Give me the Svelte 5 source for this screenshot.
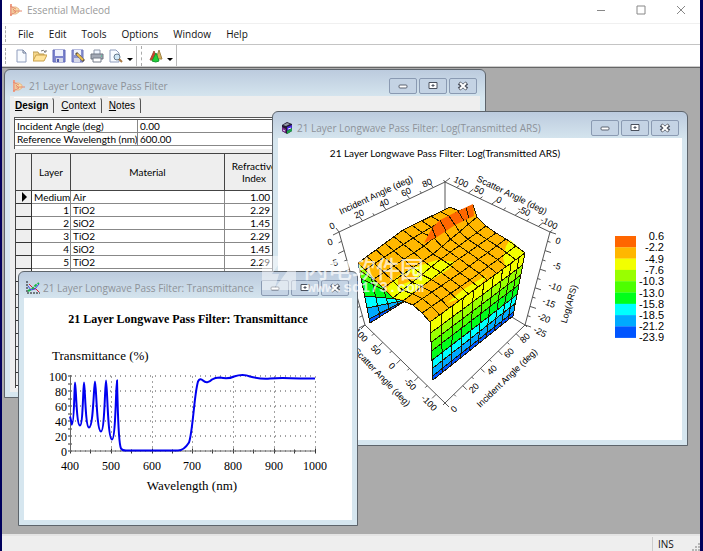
<script lang="ts">
	type Point = [number, number];

	const menus = ['File', 'Edit', 'Tools', 'Options', 'Window', 'Help'];

	const layers = [
		{ name: 'Medium', material: 'Air', index: '1.00' },
		{ name: '1', material: 'TiO2', index: '2.29' },
		{ name: '2', material: 'SiO2', index: '1.45' },
		{ name: '3', material: 'TiO2', index: '2.29' },
		{ name: '4', material: 'SiO2', index: '1.45' },
		{ name: '5', material: 'TiO2', index: '2.29' }
	];
	const emptyRows = Array(9).fill({ name: '', material: '', index: '' });

	const legend = [
		{ color: '#ff6600', label: '0.6' },
		{ color: '#ffb700', label: '-2.2' },
		{ color: '#f2ff00', label: '-4.9' },
		{ color: '#99ff00', label: '-7.6' },
		{ color: '#4dff00', label: '-10.3' },
		{ color: '#00ff1a', label: '-13.0' },
		{ color: '#00ffff', label: '-15.8' },
		{ color: '#00aaff', label: '-18.5' },
		{ color: '#0055ff', label: '-21.2' }
	];

	// transmittance curve: ripples below the cut, then the pass band
	const ripples: Point[] = [
		[72, 424], [75, 382], [80, 425], [84, 382], [89, 427], [95, 381],
		[101, 431], [106, 380], [112, 439], [117, 380]
	];

	const ripplePath = () => {
		let d = 'M70 416L72 424';
		for (let i = 1; i < ripples.length; i++) {
			const [x0, y0] = ripples[i - 1];
			const [x1, y1] = ripples[i];
			const dx = x1 - x0;
			const rising = y1 < y0;
			d += `C${x0 + dx * (rising ? 0.75 : 0.2)} ${y0} ${x1 - dx * (rising ? 0.2 : 0.75)} ${y1} ${x1} ${y1}`;
		}
		return d;
	};

	const curve =
		ripplePath() +
		'C118 410 118 442 121 448Q122 450 126 450H178Q184 450 189 442C193 430 194 395 198 381Q200 377 203 380Q207 384 212 379Q215 377 220 377Q228 379 234 376Q243 373 250 376Q262 379 270 378Q280 377 300 378H315';

	// surface mesh
	const lerp = (a: Point, b: Point, t: number): Point => [
		a[0] + (b[0] - a[0]) * t,
		a[1] + (b[1] - a[1]) * t
	];

	const toPath = (pts: Point[]) =>
		'M' + pts.map(([x, y]) => `${x.toFixed(1)} ${y.toFixed(1)}`).join('L');

	const frontEdge: Point[] = [
		[358, 263], [365, 270], [374, 279], [383, 288], [393, 298], [403, 301], [413, 305], [422, 313], [430, 322]
	];
	const middleEdge: Point[] = [
		[403, 230], [413, 238], [424, 246], [433, 254], [441, 259], [450, 265], [460, 273], [470, 280], [478, 287]
	];
	const backEdge: Point[] = [
		[450, 207], [459, 211], [473, 205], [477, 217], [486, 226], [496, 233], [506, 239], [516, 246], [525, 253]
	];

	const meshLines: string[] = [];
	frontEdge.forEach((p, i) => meshLines.push(toPath([p, middleEdge[i], backEdge[i]])));
	for (let i = 0; i <= 10; i++) {
		const t = i / 10;
		meshLines.push(
			toPath(
				frontEdge.map((p, k) =>
					t < 0.5 ? lerp(p, middleEdge[k], t * 2) : lerp(middleEdge[k], backEdge[k], t * 2 - 1)
				)
			)
		);
	}

	const makeWall = (tl: Point, tr: Point, bl: Point, br: Point, levels: number[], cols: number) => {
		const row = (v: number): Point[] => [lerp(tl, bl, v), lerp(tr, br, v)];
		const bands = levels.slice(1).map((v, i) => {
			const [a, b] = row(levels[i]);
			const [c, d] = row(v);
			return toPath([a, b, d, c]) + 'Z';
		});
		const lines = levels.map((v) => toPath(row(v)));
		for (let i = 0; i <= cols; i++) {
			// columns get narrower towards the back
			const t = 1 - Math.pow(1 - i / cols, 1.2);
			lines.push(toPath([lerp(tl, tr, t), lerp(bl, br, t)]));
		}
		return { bands, lines };
	};

	const rightWall = makeWall(
		[430, 322], [525, 253], [433, 380], [513, 316],
		[0, 0.19, 0.35, 0.5, 0.66, 0.8, 0.93, 1], 10
	);
	const leftWall = makeWall(
		[358, 263], [400, 298], [370, 323], [405, 301],
		[0, 0.12, 0.26, 0.55, 0.75, 0.93, 1], 4
	);
	const rightColors = ['#f2ff00', '#99ff00', '#4dff00', '#00ff1a', '#00ffff', '#00aaff', '#0055ff'];
	const leftColors = ['#99ff00', '#4dff00', '#00ff1a', '#00ffff', '#00aaff', '#0055ff'];

	const topFace =
		toPath([...frontEdge, middleEdge[8], ...[...backEdge].reverse(), middleEdge[0]]) + 'Z';

	// axis ticks between two ends of an axis
	const ticks = (a: Point, b: Point, count: number, dx: number, dy: number) =>
		Array.from({ length: count + 1 }, (_, i) => {
			const [x, y] = lerp(a, b, i / count);
			const k = i % 2 ? 0.5 : 1;
			return `M${x} ${y}l${dx * k} ${dy * k}`;
		}).join('');

	const axisTicks = [
		ticks([339, 232], [445, 182], 9, -3, -4),
		ticks([445, 182], [550, 232], 9, 5, -4),
		ticks([550, 232], [525, 325], 10, 6, 2),
		ticks([339, 232], [365, 325], 10, -6, 3),
		ticks([365, 325], [445, 403], 9, -4, 4),
		ticks([445, 403], [525, 325], 9, 4, 4)
	].join('');

	const axisLabels = [
		{ x: 376, y: 195, r: -25, text: 'Incident Angle (deg)' },
		{ x: 332, y: 226, r: -24, text: '0' },
		{ x: 359, y: 214, r: -24, text: '20' },
		{ x: 384, y: 203, r: -24, text: '40' },
		{ x: 406, y: 192, r: -24, text: '60' },
		{ x: 427, y: 183, r: -24, text: '80' },
		{ x: 512, y: 195, r: 26, text: 'Scatter Angle (deg)' },
		{ x: 461, y: 182, r: 26, text: '100' },
		{ x: 479, y: 190, r: 26, text: '50' },
		{ x: 499, y: 200, r: 26, text: '0' },
		{ x: 524, y: 211, r: 26, text: '-50' },
		{ x: 549, y: 223, r: 26, text: '-100' },
		{ x: 330, y: 242, r: -20, text: '0' },
		{ x: 334, y: 263, r: -16, text: '-5' },
		{ x: 558, y: 241, r: 18, text: '0' },
		{ x: 557, y: 266, r: 18, text: '-5' },
		{ x: 555, y: 287, r: 20, text: '-10' },
		{ x: 549, y: 303, r: 22, text: '-15' },
		{ x: 544, y: 318, r: 25, text: '-20' },
		{ x: 540, y: 332, r: 28, text: '-25' },
		{ x: 569, y: 304, r: -74, text: 'Log(ARS)' },
		{ x: 382, y: 377, r: 46, text: 'Scatter Angle (deg)' },
		{ x: 361, y: 335, r: 46, text: '100' },
		{ x: 376, y: 350, r: 46, text: '50' },
		{ x: 392, y: 366, r: 46, text: '0' },
		{ x: 410, y: 384, r: 46, text: '-50' },
		{ x: 429, y: 403, r: 46, text: '-100' },
		{ x: 454, y: 409, r: -44, text: '0' },
		{ x: 474, y: 388, r: -44, text: '20' },
		{ x: 492, y: 370, r: -44, text: '40' },
		{ x: 509, y: 353, r: -44, text: '60' },
		{ x: 525, y: 338, r: -44, text: '80' },
		{ x: 507, y: 378, r: -44, text: 'Incident Angle (deg)' }
	];
</script>

{#snippet layersIcon()}
	<svg class="icon" viewBox="0 0 14 14" aria-hidden="true">
		<path d="M2 1v12" stroke="#f0a088" stroke-width="2" />
		<path d="M3 4h4l3 2v3l-3 2h-4z" fill="#f7dfa6" stroke="#e8b890" />
		<path d="M1 3l6 3M1 12l6-3M4 8h9M4 6l3 3" stroke="#e58a70" fill="none" />
	</svg>
{/snippet}

{#snippet plotIcon()}
	<svg class="icon" viewBox="0 0 14 14" aria-hidden="true">
		<path d="M1 0v12h13" stroke="#111" fill="none" stroke-dasharray="2 1" />
		<path d="M3 3l4 4 3 1 3 3" stroke="#e01830" fill="none" />
		<path d="M2 10l4-2 4-4 3-2" stroke="#1ab84a" fill="none" stroke-width="2" stroke-dasharray="3 1" />
		<path d="M2 5l3 4 4-1 4-5" stroke="#3a46e0" fill="none" />
	</svg>
{/snippet}

{#snippet cubeIcon()}
	<svg class="icon" viewBox="0 0 14 14" aria-hidden="true">
		<path d="M2 4l5-3 5 2v7l-5 3-5-3z" fill="#221a33" />
		<path d="M3 4l4-2 3 1-4 2z" fill="#9aa0a8" />
		<path d="M7 6l5-2v3l-5 3z" fill="#4a28d8" />
		<path d="M7 10l5-3v3l-5 3z" fill="#1fa04a" />
		<path d="M2 6l4 2v4l-4-2z" fill="#7a2a8a" />
		<path d="M3 9l2 1M8 8l3-1" stroke="#e8f0ff" />
	</svg>
{/snippet}

{#snippet windowButtons()}
	<div class="window-buttons">
		<button aria-label="Minimize">
			<svg viewBox="0 0 12 10"><rect x="2" y="4" width="8" height="3" rx="1" fill="#fff" stroke="#5b6270" /></svg>
		</button>
		<button aria-label="Maximize">
			<svg viewBox="0 0 12 10"><path d="M2 1.500h8v6h-8z" fill="#fff" stroke="#4a505c" /><path d="M5 4h2v1h-2z" fill="#8895a8" stroke="#4a505c" /></svg>
		</button>
		<button aria-label="Close">
			<svg viewBox="0 0 12 10"><path d="M2 2l8 6M10 2l-8 6" stroke="#4a505c" stroke-width="4" /><path d="M3 2l6 6M9 2l-6 6" stroke="#fff" stroke-width="2" /></svg>
		</button>
	</div>
{/snippet}

<div class="app">
	<header class="titlebar">
		{@render layersIcon()}
		<h1>Essential Macleod</h1>
		<div class="system-buttons">
			<button aria-label="Minimize"><svg viewBox="0 0 10 10"><path d="M1 5.500h8" /></svg></button>
			<button aria-label="Maximize"><svg viewBox="0 0 10 10"><path d="M1 1h8v8h-8z" /></svg></button>
			<button aria-label="Close"><svg viewBox="0 0 10 10"><path d="M1 1l8 8M9 1l-8 8" /></svg></button>
		</div>
	</header>

	<nav class="menubar">
		<span class="grip"></span>
		{#each menus as menu}
			<button>{menu}</button>
		{/each}
	</nav>

	<div class="toolbar">
		<span class="grip"></span>
		<button aria-label="New">
			<svg viewBox="0 0 14 14"><path d="M3 1h6l3 3v9h-9z" fill="#f8fbff" stroke="#8f9dbd" /><path d="M9 1v3h3" fill="none" stroke="#6b7894" /></svg>
		</button>
		<button aria-label="Open">
			<svg viewBox="0 0 14 14"><path d="M0 12v-9h5l1 2h5v2" fill="#f4d68a" stroke="#b99a55" /><path d="M0 12l3-6h11l-3 6z" fill="#ffe39a" stroke="#c9a04a" /><path d="M8 2q3-2 4 1M11 3h2v-2" fill="none" stroke="#777" /></svg>
		</button>
		<button aria-label="Save">
			<svg viewBox="0 0 14 14"><path d="M1 1h12v12h-12z" fill="#7b83cc" stroke="#6068b8" /><path d="M3 1h8v6h-8z" fill="#eef1fb" /><path d="M4 9h7v4h-7z" fill="#d5d8e8" /><path d="M5 10h2v3h-2z" fill="#4f58a8" /></svg>
		</button>
		<button aria-label="Save as">
			<svg viewBox="0 0 14 14"><path d="M1 1h11v12h-11z" fill="#8b92cf" stroke="#6d76be" /><path d="M3 1h7v5h-7z" fill="#eef1fb" /><path d="M3 9h6v4h-6z" fill="#d5d8e8" /><path d="M5 4l8 8" stroke="#5c5240" stroke-width="3" /><path d="M6 5l6 6" stroke="#f0c050" stroke-width="2" /></svg>
		</button>
		<button aria-label="Print">
			<svg viewBox="0 0 14 14"><path d="M4 1h6v5h-6z" fill="#f0f6ff" stroke="#8b95a8" /><path d="M1 5h12v5h-12z" fill="#a3a9b5" stroke="#6f7682" /><path d="M3 9h8v4h-8z" fill="#fff" stroke="#747c8a" /><path d="M11 7h1" stroke="#3c8" /></svg>
		</button>
		<button aria-label="Print preview">
			<svg viewBox="0 0 14 14"><path d="M1 1h6l3 3v9h-9z" fill="#f8fbff" stroke="#8f9dbd" /><circle cx="8" cy="8" r="3" fill="#cfe6f5" stroke="#66788c" /><path d="M10 10l3 3" stroke="#a97a45" stroke-width="2" /></svg>
		</button>
		<span class="drop"></span>
		<span class="grip second"></span>
		<button aria-label="Materials">
			<svg viewBox="0 0 14 14"><path d="M1 11l4-9 4 9z" fill="#d83a2a" stroke="#a2503a" /><path d="M7 10l3-9 3 9z" fill="#d9b25a" stroke="#a08448" /><path d="M3 12l4-8 3 8q-3 2-7 0z" fill="#22d03a" stroke="#189a30" /></svg>
		</button>
		<span class="drop"></span>
		<span class="toolbar-end"></span>
	</div>

	<main class="workspace">
		<section class="window design">
			<header>
				{@render layersIcon()}
				<h2>21 Layer Longwave Pass Filter</h2>
				{@render windowButtons()}
			</header>
			<div class="body">
				<div class="tabs">
					<button class="active"><u>D</u>esign</button>
					<button><u>C</u>ontext</button>
					<button><u>N</u>otes</button>
				</div>
				<div class="params">
					<table>
						<tbody>
							<tr><th scope="row">Incident Angle (deg)</th><td>0.00</td></tr>
							<tr><th scope="row">Reference Wavelength (nm)</th><td>600.00</td></tr>
						</tbody>
					</table>
				</div>
				<div class="layers">
					<table>
						<thead>
							<tr>
								<th class="marker"></th>
								<th class="layer">Layer</th>
								<th class="material">Material</th>
								<th class="index">Refractive<br />Index</th>
								<th></th>
							</tr>
						</thead>
						<tbody>
							{#each [...layers, ...emptyRows] as layer, i}
								<tr>
									<td class="marker">{#if i === 0}<span class="current"></span>{/if}</td>
									<td class="layer">{layer.name}</td>
									<td>{layer.material}</td>
									<td class="index">{layer.index}</td>
									<td></td>
								</tr>
							{/each}
						</tbody>
					</table>
				</div>
			</div>
		</section>

		<section class="window surface">
			<header>
				{@render cubeIcon()}
				<h2>21 Layer Longwave Pass Filter: Log(Transmitted ARS)</h2>
				{@render windowButtons()}
			</header>
			<div class="body">
				<svg class="chart" viewBox="278 138 404 302" role="img" aria-label="Log of transmitted ARS">
					<text class="chart-title" x="445" y="157">21 Layer Longwave Pass Filter: Log(Transmitted ARS)</text>
					<path class="axis" d="M365 325L339 232L445 182L550 232L525 325L445 403ZM445 182V230M525 325L505 313" />
					<path class="axis" d={axisTicks} />
					{#each axisLabels as label}
						<text class="axis-label" transform="translate({label.x} {label.y}) rotate({label.r})" y="3">{label.text}</text>
					{/each}

					{#each leftWall.bands as band, i}
						<path d={band} fill={leftColors[i]} />
					{/each}
					<path class="mesh" d={leftWall.lines.join('')} />
					<path d={topFace} fill="#ffb700" />
					<path d="M387 288L398 276L412 268L437 260L455 262L449 269L433 279L418 288L405 300L393 298Z" fill="#f2ff00" />
					<path d="M398 286L416 279L411 272L398 277Z" fill="#ffb700" />
					<path d="M447 303L464 289L487 275L482 283L462 298Z" fill="#f2ff00" />
					<path d="M506 246L510 240L525 253L506 268L503 258Z" fill="#f2ff00" />
					{#each rightWall.bands as band, i}
						<path d={band} fill={rightColors[i]} />
					{/each}
					<path class="mesh" d={rightWall.lines.join('')} />
					<path class="mesh" d={meshLines.join('')} />
					<path d="M424 243L432 228L440 220L458 211L473 204L474 216L455 225L437 237Z" fill="#ff6600" />
					<path class="mesh" d="M432 228L436 238M440 220L446 231M449 216L455 225M458 211L464 221M466 208L469 218" />

					{#each legend as item, i}
						<rect x="615" y={236 + i * 11.3} width="21" height="11.5" fill={item.color} />
						<text class="legend-label" x="664" y={240 + i * 11.3}>{item.label}</text>
					{/each}
					<text class="legend-label" x="664" y="341">-23.9</text>
				</svg>
			</div>
		</section>

		<section class="window transmittance">
			<header>
				{@render plotIcon()}
				<h2>21 Layer Longwave Pass Filter: Transmittance</h2>
				{@render windowButtons()}
			</header>
			<div class="body">
				<svg class="chart serif" viewBox="24 298 328 221" role="img" aria-label="Transmittance against wavelength">
					<text class="plot-title" x="188" y="322">21 Layer Longwave Pass Filter: Transmittance</text>
					<text class="plot-label" x="52" y="359">Transmittance (%)</text>
					{#each [0, 20, 40, 60, 80, 100] as value}
						{@const y = Math.round(450 - value * 0.75)}
						<path class="gridline" d="M70 {y + 0.5}H315" />
						<path class="tick" d="M68 {y + 0.5}h4" />
						<text class="right" x="67" y={y + 5}>{value}</text>
					{/each}
					{#each [10, 30, 50, 70, 90] as value}
						<path class="tick" d="M68 {Math.round(450 - value * 0.75) + 0.5}h4" />
					{/each}
					{#each [400, 500, 600, 700, 800, 900, 1000] as value, i}
						{@const x = Math.round(70 + i * 40.8)}
						<path class="gridline" d="M{x + 0.5} 376V451" />
						<path class="tick" d="M{x + 0.5} 448v5" />
						<text class="middle" {x} y="469">{value}</text>
					{/each}
					{#each [0, 1, 2, 3, 4, 5] as i}
						<path class="tick" d="M{Math.round(90 + i * 40.8) + 0.5} 449v4" />
					{/each}
					<path class="plot-axis" d="M70.500 375V451M70 450.500H315" />
					<path class="curve" d={curve} />
					<text class="plot-label middle" x="192" y="489">Wavelength (nm)</text>
				</svg>
			</div>
		</section>

		<div class="watermark">
			<svg viewBox="0 0 34 34" aria-hidden="true">
				<path fill-rule="evenodd" d="M0 0H34V34H0ZM21 2L10 18h7l-4 14 13-18h-7z" fill="#fff" />
			</svg>
			<div>
				<span class="site">闪电软件园</span>
				<span class="url">www.sd173.com</span>
			</div>
		</div>
	</main>

	<footer class="statusbar">
		<span class="mode">INS</span>
		<svg viewBox="0 0 8 8" aria-hidden="true"><path d="M6 0h2v2H6zM3 3h2v2H3zM6 3h2v2H6zM0 6h2v2H0zM3 6h2v2H3zM6 6h2v2H6z" fill="#b5b5b5" /></svg>
	</footer>
</div>

<style>
	:global(body) {
		margin: 0;
	}

	.app {
		box-sizing: border-box;
		min-height: 100vh;
		display: flex;
		flex-direction: column;
		border-left: 2px solid #00005c;
		border-right: 3px solid #00005c;
		background: #fff;
		font-family: 'Open Sans', 'Noto Sans', sans-serif;
		font-size: 10px;
		color: #111;
	}

	button {
		padding: 0;
		border: 0;
		background: none;
		font: inherit;
		color: inherit;
	}

	h1,
	h2 {
		margin: 0;
		font-size: 10px;
		font-weight: 400;
		color: #8d9299;
		white-space: nowrap;
	}

	.icon {
		width: 14px;
		height: 14px;
		flex: none;
	}

	.titlebar {
		display: flex;
		align-items: center;
		height: 20px;
		padding: 0 14px 3px 7px;
		border-bottom: 1px solid #f0f0f0;
	}

	.titlebar h1 {
		margin-left: 4px;
		color: #999;
	}

	.system-buttons {
		display: flex;
		gap: 30px;
		margin-left: auto;
	}

	.system-buttons button,
	.system-buttons svg {
		display: block;
		width: 10px;
		height: 10px;
	}

	.system-buttons path {
		fill: none;
		stroke: #888;
	}

	.menubar {
		display: flex;
		align-items: center;
		gap: 15px;
		height: 20px;
		border-bottom: 1px solid #c4c4c4;
	}

	.grip {
		width: 1px;
		height: 16px;
		margin-left: 3px;
		border-left: 1px dashed #aaa;
	}

	.menubar .grip {
		margin-right: -4px;
	}

	.toolbar {
		display: flex;
		align-items: center;
		height: 21px;
		border-bottom: 1px solid #ccc;
	}

	.toolbar button,
	.toolbar button svg {
		display: block;
		width: 14px;
		height: 14px;
	}

	.toolbar button {
		margin-left: 5px;
	}

	.toolbar .grip + button {
		margin-left: 7px;
	}

	.drop {
		margin: 8px 3px 0 4px;
		border: 3px solid transparent;
		border-top-color: #000;
		border-bottom: 0;
	}

	.grip.second {
		width: 0;
		height: 20px;
		padding-left: 4px;
		margin-left: 0;
		border-left: 1px solid #bbb;
		border-right: 1px dashed #aaa;
	}

	.toolbar-end {
		height: 21px;
		border-left: 1px solid #bbb;
	}

	.workspace {
		position: relative;
		flex: 1;
		min-height: 465px;
		border-top: 1px solid #666;
		background: #ababab;
		overflow: hidden;
	}

	.window {
		position: absolute;
		box-sizing: border-box;
		display: flex;
		flex-direction: column;
		padding: 0 5px 5px;
		border: 1px solid #5d646b;
		border-radius: 6px 6px 0 0;
		background: linear-gradient(#bccbde, #d6e6ef 28px);
	}

	.window > header {
		display: flex;
		align-items: center;
		height: 26px;
		padding: 6px 3px 0 2px;
		box-sizing: border-box;
	}

	.window h2 {
		margin-left: 3px;
	}

	.window .body {
		flex: 1;
		min-height: 0;
		background: #fff;
		overflow: hidden;
	}

	.window-buttons {
		display: flex;
		gap: 2px;
		margin-left: auto;
	}

	.window-buttons button {
		display: grid;
		place-items: center;
		box-sizing: border-box;
		width: 28px;
		height: 16px;
		border: 1px solid #8a9ab2;
		border-radius: 2px;
		background: #c4d3e4;
	}

	.window-buttons svg {
		width: 12px;
		height: 10px;
	}

	.design {
		left: 2px;
		top: 1px;
		width: 482px;
		height: 329px;
	}

	.surface {
		left: 270px;
		top: 43px;
		width: 416px;
		height: 335px;
	}

	.transmittance {
		left: 16px;
		top: 203px;
		width: 340px;
		height: 255px;
	}

	.design .body {
		box-sizing: border-box;
		padding: 1px 3px 4px 4px;
		display: flex;
		flex-direction: column;
		background: #eee;
		font-family: Lato, 'Liberation Sans', sans-serif;
		font-size: 10px;
		line-height: 12px;
		color: #000;
	}

	.tabs {
		display: flex;
		height: 16px;
		margin-bottom: 4px;
		font-family: 'Liberation Sans', Arial, sans-serif;
	}

	.tabs button {
		padding: 0 5px 0 1px;
		margin-right: 6px;
		border-right: 1px solid #555;
		border-top: 1px solid #fff;
		border-radius: 0 4px 0 0;
	}

	.tabs .active {
		font-weight: 700;
	}

	table {
		border-collapse: separate;
		border-spacing: 0;
		table-layout: fixed;
		width: 100%;
	}

	th,
	td {
		box-sizing: border-box;
		padding: 0 0 0 2px;
		font-weight: 400;
		text-align: left;
		white-space: nowrap;
		border-right: 1px solid #888;
		border-bottom: 1px solid #888;
	}

	.params {
		height: 29px;
		margin-bottom: 4px;
		border-top: 3px double #555;
		border-left: 1px solid #555;
		background: #fff;
	}

	.params th {
		width: 123px;
	}

	.layers {
		flex: 1;
		min-height: 0;
		margin-left: 1px;
		border-top: 1px solid #444;
		border-left: 1px solid #444;
		background: #fff;
		overflow: hidden;
	}

	.layers thead th {
		height: 37px;
		padding: 0;
		text-align: center;
		background: #eee;
		border-color: #444;
	}

	.layers th.marker {
		width: 16px;
	}

	.layers th.layer {
		width: 39px;
	}

	.layers th.material {
		width: 154px;
	}

	.layers th.index {
		width: 59px;
	}

	.layers td {
		height: 13px;
	}

	.layers td.marker {
		background: #eee;
		border-color: #333;
	}

	.layers td.layer {
		padding-right: 1px;
		text-align: right;
	}

	.layers td.index {
		padding-right: 13px;
		text-align: right;
	}

	.current {
		display: block;
		width: 0;
		margin-left: 4px;
		border: 5px solid transparent;
		border-left-color: #000;
		border-right: 0;
	}

	.chart {
		display: block;
		width: 100%;
		height: 100%;
		font-family: 'Liberation Sans', Arial, sans-serif;
		font-size: 10px;
	}

	.chart-title {
		font-family: Lato, 'Liberation Sans', sans-serif;
		text-anchor: middle;
	}

	.axis {
		fill: none;
		stroke: #555;
	}

	.axis-label {
		font-size: 9px;
		text-anchor: middle;
	}

	.mesh {
		fill: none;
		stroke: #201800;
		shape-rendering: crispEdges;
	}

	.legend-label {
		font-size: 11px;
		text-anchor: end;
	}

	.serif {
		font-family: 'Liberation Serif', 'Times New Roman', serif;
		font-size: 12px;
	}

	.plot-title {
		font-weight: 700;
		text-anchor: middle;
	}

	.plot-label {
		font-size: 13px;
	}

	.right {
		text-anchor: end;
	}

	.middle {
		text-anchor: middle;
	}

	.gridline {
		stroke: #444;
		stroke-dasharray: 1 4;
	}

	.tick {
		stroke: #333;
	}

	.plot-axis {
		fill: none;
		stroke: #666;
	}

	.curve {
		fill: none;
		stroke: #0000f0;
		stroke-width: 2;
	}

	.watermark {
		position: absolute;
		left: 260px;
		top: 188px;
		display: flex;
		gap: 8px;
		color: #fff;
		opacity: 0.7;
		pointer-events: none;
	}

	.watermark svg {
		width: 34px;
		height: 34px;
		opacity: 0.7;
	}

	.watermark span {
		display: block;
	}

	.site {
		font-family: 'Noto Sans CJK SC', sans-serif;
		font-size: 24px;
		font-weight: 500;
		line-height: 24px;
	}

	.url {
		margin-left: 3px;
		font-family: 'Liberation Mono', 'Courier New', monospace;
		font-size: 15px;
		font-weight: 700;
		line-height: 18px;
	}

	.statusbar {
		display: flex;
		align-items: center;
		justify-content: flex-end;
		height: 15px;
		border-top: 2px solid #e4e4e4;
		background: #eee;
	}

	.mode {
		width: 34px;
		padding-left: 5px;
		border-left: 1px solid #ccc;
	}

	.statusbar svg {
		width: 8px;
		height: 8px;
		align-self: flex-end;
	}
</style>
